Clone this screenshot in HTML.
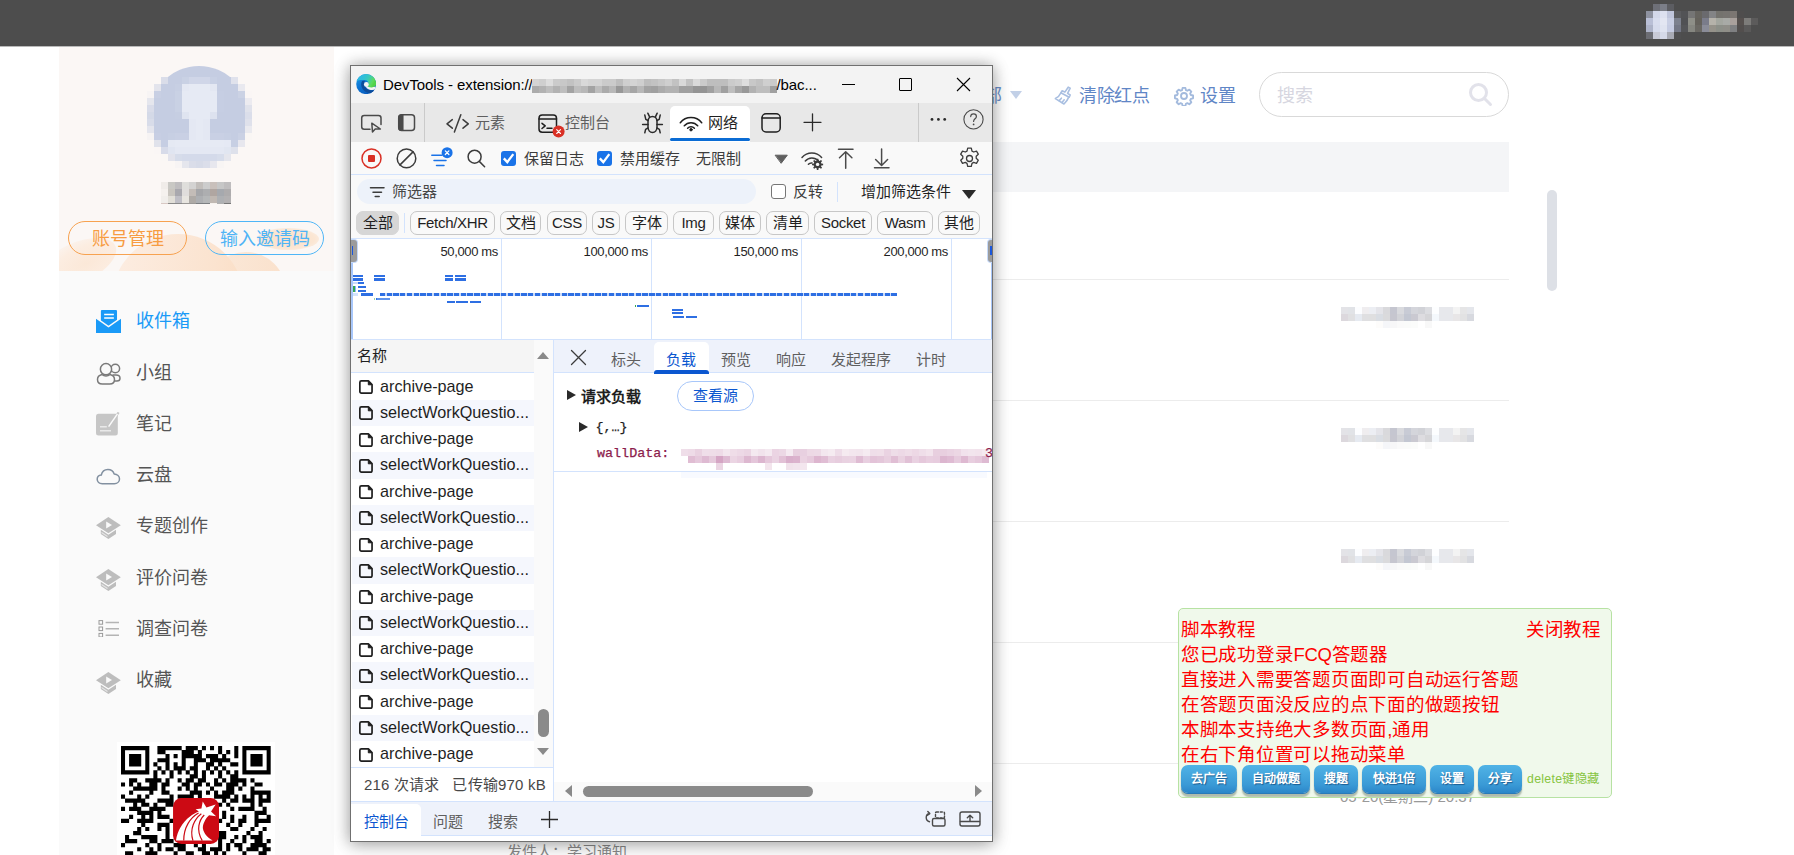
<!DOCTYPE html>
<html lang="zh-CN">
<head>
<meta charset="utf-8">
<title>收件箱</title>
<style>
*{box-sizing:border-box;margin:0;padding:0}
html,body{width:1794px;height:855px;overflow:hidden;background:#fff}
body{position:relative;font-family:"Liberation Sans",sans-serif;color:#333}
.abs{position:absolute}
.nw{white-space:nowrap}
/* ---------- page ---------- */
#topbar{position:absolute;left:0;top:0;width:1794px;height:46px;background:#4d4d4d}
#sidebar{position:absolute;left:59px;top:47px;width:275px;height:808px;background:#fafafa;overflow:hidden}
#sidehead{position:absolute;left:0;top:0;width:275px;height:224px;background:#fbf7f5;overflow:hidden}
.pillbtn{position:absolute;top:174px;width:119px;height:34px;border-radius:17px;border:1px solid;font-size:18px;line-height:34px;text-align:center;white-space:nowrap;overflow:hidden}
.menu{position:absolute;left:77px;font-size:18px;line-height:24px;height:24px;color:#555;white-space:nowrap}
.micon{position:absolute;left:37px}
.blurdate{width:133px;height:20px;background:linear-gradient(90deg,#e4e4e4 0 6%,#f4f4f4 6% 10%,#dcdcdc 10% 28%,#c6c6ca 28% 50%,#d4d4d8 50% 68%,#fff 68% 72%,#e6e6e6 72% 100%);opacity:.9}
/* ---------- devtools ---------- */
#dt{position:absolute;left:350px;top:65px;width:643px;height:777px;background:#fff;border:1px solid #707070;box-shadow:0 0 14px rgba(0,0,0,.28),0 4px 18px rgba(0,0,0,.18);overflow:hidden;font-size:15px;color:#1f1f1f}
#dt .in{position:absolute;left:0;top:0;width:641px;height:775px}

#dt .title{position:absolute;left:0;top:0;width:641px;height:37px;background:#f3f3f3}
#dt .tabs{position:absolute;left:0;top:37px;width:641px;height:39px;background:#e8e8e8}
#dt .ntb{position:absolute;left:0;top:76px;width:641px;height:33px;background:#f9f9f9;border-bottom:1px solid #d3e3fd}
#dt .frow{position:absolute;left:0;top:109px;width:641px;height:64px;background:#f9f9f9}
.t15{position:absolute;font-size:15px;line-height:20px;white-space:nowrap}
.chip{position:absolute;top:145px;height:24px;border:1px solid #c7c7c7;border-radius:7px;font-size:15px;line-height:22px;text-align:center;white-space:nowrap;color:#1f1f1f;overflow:hidden}
.cb svg{display:block}
.cb{position:absolute;width:15px;height:15px;border-radius:3px;background:#1a73e8}

#dt .tl{position:absolute;left:0;top:172px;width:641px;height:102px;background:#fff;border-top:1px solid #d3e3fd;border-bottom:1px solid #d3e3fd}
.tlab{position:absolute;top:5px;letter-spacing:-0.350px;font-size:13px;line-height:16px;color:#1f1f1f;text-align:right;width:80px;white-space:nowrap}
.gl{position:absolute;top:0;width:1px;height:100px;background:#d3e3fd}
.row{position:absolute;left:1px;width:182px;height:26.250px;font-size:16.200px;line-height:25.600px;color:#1f1f1f;white-space:nowrap;overflow:hidden;padding-left:28px;letter-spacing:0}
.row.alt{background:#f5f7fd}
.row svg{position:absolute;left:7px;top:6.600px}
.dtab{position:absolute;top:284px;font-size:15px;line-height:20px;color:#5f5f5f;white-space:nowrap}
.tb i{position:absolute;display:block}
.mono{font-family:"Liberation Mono",monospace;-webkit-text-stroke:.25px currentColor}

#tut{position:absolute;left:1178px;top:608px;width:434px;height:190px;background:#f0f9eb;border:1px solid #b7e2a3;border-radius:5px;overflow:hidden}
#tut .ln{position:absolute;left:2px;font-size:18.500px;letter-spacing:-0.260px;line-height:25px;color:#ff0000;white-space:nowrap}
.tbtn{position:absolute;top:156px;height:28px;border-radius:7px;background:linear-gradient(180deg,#50b3e6 0%,#3a9ad6 70%,#2b86c9 100%);box-shadow:0 1px 0 #2a7ab8,0 3.500px 1.500px rgba(110,125,110,.5);color:#fff;font-weight:bold;font-size:12px;line-height:29px;text-align:center;white-space:nowrap;text-shadow:1px 1px 1px rgba(0,40,90,.55)}
</style>
</head>
<body>
<div id="topbar"></div><div class="abs" style="left:0;top:46px;width:1794px;height:1px;background:#b9b9b9"></div>
<div id="sidebar">
  <div id="sidehead">
    <div class="abs" style="left:-24px;top:196px;width:84px;height:40px;border-radius:50%;transform:rotate(-24deg);background:radial-gradient(ellipse at 60% 60%,#fbe8d8 0%,#fcede1 50%,rgba(251,247,245,0) 95%)"></div>
    <div class="abs" style="left:147px;top:205px;width:80px;height:80px;border-radius:50%;background:linear-gradient(100deg,#fbe9da,#fae0ca)"></div>
    <div class="abs" style="left:53px;top:187px;width:132px;height:132px;border-radius:50%;background:linear-gradient(100deg,#fcece0 10%,#fbe3cf 70%,#fadcc2 100%)"></div>
    <div class="abs" style="left:198px;top:181px;width:62px;height:22px;border-radius:50%;background:radial-gradient(ellipse at 50% 50%,#fbe1c9 0%,#fbe6d3 60%,rgba(251,240,232,0) 100%)"></div>
    <div class="abs" style="left:90.0px;top:19.0px;width:100.0px;height:12.3px;overflow:hidden"><div class="abs" style="left:0;top:0;width:100.0px;height:100.0px;border-radius:50%;background:#c5cde2"></div></div><svg class="abs" style="left:87.9px;top:30.3px" width="105.0" height="91.0" viewBox="0 0 15 13" preserveAspectRatio="none" shape-rendering="crispEdges"><rect x="0" y="0" width="2" height="1" fill="#fbf7f5"/><rect x="2" y="0" width="1" height="1" fill="#dadde9"/><rect x="3" y="0" width="2" height="1" fill="#c5cde2"/><rect x="5" y="0" width="1" height="1" fill="#c9d1e4"/><rect x="6" y="0" width="3" height="1" fill="#d0d6e8"/><rect x="9" y="0" width="1" height="1" fill="#c8d0e4"/><rect x="10" y="0" width="2" height="1" fill="#c5cde2"/><rect x="12" y="0" width="1" height="1" fill="#e0e2ec"/><rect x="13" y="0" width="2" height="1" fill="#fbf7f5"/><rect x="0" y="1" width="1" height="1" fill="#fbf7f5"/><rect x="1" y="1" width="1" height="1" fill="#e3e4ec"/><rect x="2" y="1" width="2" height="1" fill="#c5cde2"/><rect x="4" y="1" width="1" height="1" fill="#c7cfe3"/><rect x="5" y="1" width="1" height="1" fill="#e4e8f3"/><rect x="6" y="1" width="3" height="1" fill="#e6eaf4"/><rect x="9" y="1" width="1" height="1" fill="#e3e7f2"/><rect x="10" y="1" width="3" height="1" fill="#c5cde2"/><rect x="13" y="1" width="1" height="1" fill="#e9e9ef"/><rect x="14" y="1" width="1" height="1" fill="#fbf7f5"/><rect x="0" y="2" width="1" height="1" fill="#f7f4f4"/><rect x="1" y="2" width="1" height="1" fill="#c8cfe3"/><rect x="2" y="2" width="2" height="1" fill="#c5cde2"/><rect x="4" y="2" width="1" height="1" fill="#c9d1e4"/><rect x="5" y="2" width="5" height="1" fill="#e6eaf4"/><rect x="10" y="2" width="1" height="1" fill="#c6cee3"/><rect x="11" y="2" width="2" height="1" fill="#c5cde2"/><rect x="13" y="2" width="1" height="1" fill="#cbd2e4"/><rect x="14" y="2" width="1" height="1" fill="#faf6f5"/><rect x="0" y="3" width="1" height="1" fill="#e5e6ed"/><rect x="1" y="3" width="3" height="1" fill="#c5cde2"/><rect x="4" y="3" width="1" height="1" fill="#c9d1e4"/><rect x="5" y="3" width="5" height="1" fill="#e6eaf4"/><rect x="10" y="3" width="1" height="1" fill="#c6cee3"/><rect x="11" y="3" width="3" height="1" fill="#c5cde2"/><rect x="14" y="3" width="1" height="1" fill="#ecebf0"/><rect x="0" y="4" width="1" height="1" fill="#d9dce9"/><rect x="1" y="4" width="3" height="1" fill="#c5cde2"/><rect x="4" y="4" width="1" height="1" fill="#c9d1e4"/><rect x="5" y="4" width="5" height="1" fill="#e6eaf4"/><rect x="10" y="4" width="1" height="1" fill="#c6cee3"/><rect x="11" y="4" width="3" height="1" fill="#c5cde2"/><rect x="14" y="4" width="1" height="1" fill="#e0e2eb"/><rect x="0" y="5" width="1" height="1" fill="#d4d9e7"/><rect x="1" y="5" width="3" height="1" fill="#c5cde2"/><rect x="4" y="5" width="1" height="1" fill="#c6cee2"/><rect x="5" y="5" width="1" height="1" fill="#dfe4f0"/><rect x="6" y="5" width="3" height="1" fill="#e6eaf4"/><rect x="9" y="5" width="1" height="1" fill="#dde2ef"/><rect x="10" y="5" width="4" height="1" fill="#c5cde2"/><rect x="14" y="5" width="1" height="1" fill="#dbdeea"/><rect x="0" y="6" width="1" height="1" fill="#d8dce9"/><rect x="1" y="6" width="5" height="1" fill="#c5cde2"/><rect x="6" y="6" width="1" height="1" fill="#e4e8f3"/><rect x="7" y="6" width="1" height="1" fill="#e6eaf4"/><rect x="8" y="6" width="1" height="1" fill="#e4e8f3"/><rect x="9" y="6" width="5" height="1" fill="#c5cde2"/><rect x="14" y="6" width="1" height="1" fill="#dfe1eb"/><rect x="0" y="7" width="1" height="1" fill="#e4e5ed"/><rect x="1" y="7" width="5" height="1" fill="#c5cde2"/><rect x="6" y="7" width="1" height="1" fill="#e4e8f3"/><rect x="7" y="7" width="1" height="1" fill="#e6eaf4"/><rect x="8" y="7" width="1" height="1" fill="#e4e8f3"/><rect x="9" y="7" width="5" height="1" fill="#c5cde2"/><rect x="14" y="7" width="1" height="1" fill="#eaeaef"/><rect x="0" y="8" width="1" height="1" fill="#f6f3f3"/><rect x="1" y="8" width="1" height="1" fill="#c7cee3"/><rect x="2" y="8" width="1" height="1" fill="#c5cde2"/><rect x="3" y="8" width="1" height="1" fill="#c7cfe3"/><rect x="4" y="8" width="2" height="1" fill="#c9d0e4"/><rect x="6" y="8" width="1" height="1" fill="#e4e8f3"/><rect x="7" y="8" width="1" height="1" fill="#e6eaf4"/><rect x="8" y="8" width="1" height="1" fill="#e4e8f3"/><rect x="9" y="8" width="2" height="1" fill="#c9d0e4"/><rect x="11" y="8" width="1" height="1" fill="#c7cfe3"/><rect x="12" y="8" width="1" height="1" fill="#c5cde2"/><rect x="13" y="8" width="1" height="1" fill="#cad1e4"/><rect x="14" y="8" width="1" height="1" fill="#f9f6f4"/><rect x="0" y="9" width="1" height="1" fill="#fbf7f5"/><rect x="1" y="9" width="1" height="1" fill="#e0e2eb"/><rect x="2" y="9" width="1" height="1" fill="#c6cee3"/><rect x="3" y="9" width="1" height="1" fill="#e5e9f3"/><rect x="4" y="9" width="7" height="1" fill="#e6eaf4"/><rect x="11" y="9" width="1" height="1" fill="#e5e9f4"/><rect x="12" y="9" width="1" height="1" fill="#c7cfe3"/><rect x="13" y="9" width="1" height="1" fill="#e7e7ee"/><rect x="14" y="9" width="1" height="1" fill="#fbf7f5"/><rect x="0" y="10" width="1" height="1" fill="#fbf7f5"/><rect x="1" y="10" width="1" height="1" fill="#faf6f5"/><rect x="2" y="10" width="1" height="1" fill="#d7dbe9"/><rect x="3" y="10" width="1" height="1" fill="#e0e5f1"/><rect x="4" y="10" width="7" height="1" fill="#e4e8f3"/><rect x="11" y="10" width="1" height="1" fill="#e1e6f1"/><rect x="12" y="10" width="1" height="1" fill="#dee1eb"/><rect x="13" y="10" width="2" height="1" fill="#fbf7f5"/><rect x="0" y="11" width="2" height="1" fill="#fbf7f5"/><rect x="2" y="11" width="1" height="1" fill="#faf7f5"/><rect x="3" y="11" width="1" height="1" fill="#e2e3ec"/><rect x="4" y="11" width="1" height="1" fill="#d6dcea"/><rect x="5" y="11" width="5" height="1" fill="#d4daea"/><rect x="10" y="11" width="1" height="1" fill="#d7ddeb"/><rect x="11" y="11" width="1" height="1" fill="#e5e6ed"/><rect x="12" y="11" width="3" height="1" fill="#fbf7f5"/><rect x="0" y="12" width="4" height="1" fill="#fbf7f5"/><rect x="4" y="12" width="1" height="1" fill="#f7f4f4"/><rect x="5" y="12" width="1" height="1" fill="#e5e6ed"/><rect x="6" y="12" width="1" height="1" fill="#dadde9"/><rect x="7" y="12" width="1" height="1" fill="#d7dbe8"/><rect x="8" y="12" width="1" height="1" fill="#dbdeea"/><rect x="9" y="12" width="1" height="1" fill="#e7e7ee"/><rect x="10" y="12" width="1" height="1" fill="#f8f5f4"/><rect x="11" y="12" width="4" height="1" fill="#fbf7f5"/></svg>
    <svg class="abs" style="left:102.0px;top:135.0px" width="70.0" height="21.0" viewBox="0 0 10 3" preserveAspectRatio="none" shape-rendering="crispEdges"><rect x="0" y="0" width="1" height="1" fill="#f0ece9"/><rect x="1" y="0" width="1" height="1" fill="#c9c8c4"/><rect x="2" y="0" width="1" height="1" fill="#bfbdbf"/><rect x="3" y="0" width="1" height="1" fill="#dfdedb"/><rect x="4" y="0" width="1" height="1" fill="#d4d3d2"/><rect x="5" y="0" width="1" height="1" fill="#c2bebb"/><rect x="6" y="0" width="1" height="1" fill="#cccccc"/><rect x="7" y="0" width="1" height="1" fill="#c9c0bb"/><rect x="8" y="0" width="1" height="1" fill="#c6c6c6"/><rect x="9" y="0" width="1" height="1" fill="#bfbdbe"/><rect x="0" y="1" width="1" height="1" fill="#f5f1ee"/><rect x="1" y="1" width="1" height="1" fill="#c9c5bf"/><rect x="2" y="1" width="1" height="1" fill="#a9a8ae"/><rect x="3" y="1" width="1" height="1" fill="#e0dddc"/><rect x="4" y="1" width="1" height="1" fill="#c3bcb7"/><rect x="5" y="1" width="1" height="1" fill="#a5a6a9"/><rect x="6" y="1" width="1" height="1" fill="#adaeb0"/><rect x="7" y="1" width="1" height="1" fill="#b0a6a1"/><rect x="8" y="1" width="1" height="1" fill="#a6a9ae"/><rect x="9" y="1" width="1" height="1" fill="#aeacad"/><rect x="0" y="2" width="1" height="1" fill="#f1eeeb"/><rect x="1" y="2" width="1" height="1" fill="#e2dfd8"/><rect x="2" y="2" width="1" height="1" fill="#bfbec5"/><rect x="3" y="2" width="1" height="1" fill="#e8e5e0"/><rect x="4" y="2" width="1" height="1" fill="#aeaaa6"/><rect x="5" y="2" width="1" height="1" fill="#adafb2"/><rect x="6" y="2" width="1" height="1" fill="#b5b7b8"/><rect x="7" y="2" width="1" height="1" fill="#c0b8b2"/><rect x="8" y="2" width="1" height="1" fill="#aeb0b3"/><rect x="9" y="2" width="1" height="1" fill="#b3b1b2"/></svg><div class="abs" style="left:102px;top:156.2px;width:70px;height:1px;background:linear-gradient(90deg,#d9c9c4 0 10%,#8a8a8a 10% 30%,#9a9896 30% 50%,#7c7f82 50% 70%,#f6f2ee 70% 80%,#b0b0b0 80% 90%,#777 90%)"></div>
    <div class="pillbtn" style="left:9px;border-color:#f7a250;color:#f79c42">账号管理</div>
    <div class="pillbtn" style="left:146px;border-color:#4fb6f7;color:#4fb4f6">输入邀请码</div>
  </div>

  <svg class="micon" style="top:262.500px" width="25" height="23" viewBox="0 0 24.500 22.500"><rect x="4.800" y="0" width="15.800" height="16" rx="1" fill="#1a9af7"/><path d="M8 4.300h9.500M8 7.800h9.500" stroke="#fff" stroke-width="1.500"/><path d="M0 7.700L12.250 16.300 24.500 7.700V22.500H0z" fill="#1a9af7"/><path d="M0 7.700L12.250 16.300 24.500 7.700" fill="none" stroke="#fafafa" stroke-width="1.400"/></svg>
  <svg class="micon" style="top:315px" width="25" height="23" viewBox="0 0 25 23" fill="#fafafa" stroke="#7a7a7a" stroke-width="1.500"><circle cx="19.300" cy="6.500" r="4.300"/><path d="M16.500 13h3.500c2.500 0 4 1.500 4 3.200 0 1.800-1.200 2.800-3 2.800h-4"/><circle cx="10" cy="7.200" r="5.600"/><path d="M5.800 12.500C3 13.300 1.500 15.200 1.500 17.500c0 2.800 2 4.500 4.800 4.500h7.400c2.800 0 4.800-1.700 4.800-4.500 0-2.300-1.500-4.200-4.300-5-1.300 1-2.700 1.500-4.200 1.500s-2.900-.5-4.200-1.500z"/></svg>
  <svg class="micon" style="top:365px" width="25" height="25" viewBox="0 0 25 25"><rect x="0" y="1.700" width="21.800" height="21.800" rx="2.500" fill="#c6c6c6"/><path d="M22.600 .4L12.800 14.300" stroke="#c6c6c6" stroke-width="2.200"/><path d="M21.500 1.900L12.600 14.600" stroke="#fafafa" stroke-width="1.500"/><path d="M4 14.800h6.800M4 18.800h11" stroke="#e9e9e9" stroke-width="1.500"/></svg>
  <svg class="micon" style="top:421px" width="25" height="17" viewBox="0 0 25 17" fill="none" stroke="#8290a0" stroke-width="1.500"><path d="M6.200 15.700c-3 0-5-1.900-5-4.400 0-2.300 1.700-4.100 4.100-4.300C6 3.700 8.600 1.400 11.900 1.400c3 0 5.400 1.800 6.300 4.500 3 .2 5.300 2.300 5.300 5 0 2.700-2.200 4.800-5.200 4.800z"/></svg>
  <svg class="micon" style="top:470px" width="25" height="22" viewBox="0 0 25 22"><path d="M12.400 0L24.800 8.300 12.400 16.300 0 8.300z" fill="#bdbdbd"/><path d="M4.800 12.800v4.300l7.600 4.900 7.600-4.900v-4.300l-7.600 4.900z" fill="#bdbdbd"/><path d="M10.200 4.600v6.800l5.800-3.400z" fill="#fafafa"/><path d="M5.500 15.500l6 3.900" stroke="#e4e4e4" stroke-width="1.200"/></svg>
  <svg class="micon" style="top:522px" width="25" height="22" viewBox="0 0 25 22"><path d="M12.400 0L24.800 8.300 12.400 16.300 0 8.300z" fill="#bdbdbd"/><path d="M4.800 12.800v4.300l7.600 4.900 7.600-4.900v-4.300l-7.600 4.900z" fill="#bdbdbd"/><path d="M10.200 4.600v6.800l5.800-3.400z" fill="#fafafa"/><path d="M5.500 15.500l6 3.900" stroke="#e4e4e4" stroke-width="1.200"/></svg>
  <svg class="micon" style="top:573px" width="25" height="17" viewBox="0 0 25 17" fill="none"><g stroke="#9a9a9a" stroke-width="1"><rect x="3" y="0.600" width="3.600" height="3.600"/><rect x="3" y="7" width="3.600" height="3.600"/><rect x="3" y="13.400" width="3.600" height="3.600"/></g><path d="M9.600 2.400H23M9.600 8.800H23M9.600 15.200H23" stroke="#b4b4b4" stroke-width="1.500"/></svg>
  <svg class="micon" style="top:625px" width="25" height="22" viewBox="0 0 25 22"><path d="M12.400 0L24.800 8.300 12.400 16.300 0 8.300z" fill="#bdbdbd"/><path d="M4.800 12.800v4.300l7.600 4.900 7.600-4.900v-4.300l-7.600 4.900z" fill="#bdbdbd"/><path d="M10.200 4.600v6.800l5.800-3.400z" fill="#fafafa"/><path d="M5.500 15.500l6 3.900" stroke="#e4e4e4" stroke-width="1.200"/></svg>
  <div class="menu" style="top:262px;color:#1a9af7">收件箱</div>
  <div class="menu" style="top:314px">小组</div>
  <div class="menu" style="top:365px">笔记</div>
  <div class="menu" style="top:416px">云盘</div>
  <div class="menu" style="top:467px">专题创作</div>
  <div class="menu" style="top:519px">评价问卷</div>
  <div class="menu" style="top:570px">调查问卷</div>
  <div class="menu" style="top:621px">收藏</div>
  <div id="qr" class="abs" style="left:58px;top:695px;width:158px;height:160px;background:#fff">
<svg class="abs" style="left:4px;top:4px" width="149.700" height="149.700" viewBox="0 0 37 37"><path d="M0 0h7v1.04h-7zM9 0h6v1.04h-6zM16 0h3v1.04h-3zM20 0h1v1.04h-1zM22 0h1v1.04h-1zM24 0h1v1.04h-1zM28 0h1v1.04h-1zM30 0h7v1.04h-7zM0 1h1v1.04h-1zM6 1h1v1.04h-1zM9 1h2v1.04h-2zM15 1h3v1.04h-3zM19 1h1v1.04h-1zM24 1h1v1.04h-1zM26 1h1v1.04h-1zM28 1h1v1.04h-1zM30 1h1v1.04h-1zM36 1h1v1.04h-1zM0 2h1v1.04h-1zM2 2h3v1.04h-3zM6 2h1v1.04h-1zM11 2h1v1.04h-1zM13 2h1v1.04h-1zM15 2h5v1.04h-5zM21 2h3v1.04h-3zM25 2h1v1.04h-1zM28 2h1v1.04h-1zM30 2h1v1.04h-1zM32 2h3v1.04h-3zM36 2h1v1.04h-1zM0 3h1v1.04h-1zM2 3h3v1.04h-3zM6 3h1v1.04h-1zM9 3h3v1.04h-3zM15 3h1v1.04h-1zM18 3h3v1.04h-3zM22 3h5v1.04h-5zM30 3h1v1.04h-1zM32 3h3v1.04h-3zM36 3h1v1.04h-1zM0 4h1v1.04h-1zM2 4h3v1.04h-3zM6 4h1v1.04h-1zM8 4h1v1.04h-1zM11 4h1v1.04h-1zM13 4h1v1.04h-1zM15 4h1v1.04h-1zM18 4h1v1.04h-1zM21 4h2v1.04h-2zM24 4h1v1.04h-1zM27 4h2v1.04h-2zM30 4h1v1.04h-1zM32 4h3v1.04h-3zM36 4h1v1.04h-1zM0 5h1v1.04h-1zM6 5h1v1.04h-1zM9 5h1v1.04h-1zM11 5h1v1.04h-1zM13 5h3v1.04h-3zM17 5h2v1.04h-2zM21 5h1v1.04h-1zM23 5h1v1.04h-1zM25 5h1v1.04h-1zM30 5h1v1.04h-1zM36 5h1v1.04h-1zM0 6h7v1.04h-7zM8 6h1v1.04h-1zM10 6h1v1.04h-1zM12 6h1v1.04h-1zM14 6h1v1.04h-1zM16 6h1v1.04h-1zM18 6h1v1.04h-1zM20 6h1v1.04h-1zM22 6h1v1.04h-1zM24 6h1v1.04h-1zM26 6h1v1.04h-1zM28 6h1v1.04h-1zM30 6h7v1.04h-7zM8 7h1v1.04h-1zM12 7h1v1.04h-1zM17 7h2v1.04h-2zM20 7h1v1.04h-1zM24 7h1v1.04h-1zM27 7h2v1.04h-2zM2 8h2v1.04h-2zM6 8h4v1.04h-4zM11 8h1v1.04h-1zM14 8h1v1.04h-1zM16 8h2v1.04h-2zM19 8h2v1.04h-2zM23 8h1v1.04h-1zM25 8h1v1.04h-1zM27 8h4v1.04h-4zM32 8h1v1.04h-1zM0 9h1v1.04h-1zM2 9h1v1.04h-1zM4 9h1v1.04h-1zM7 9h2v1.04h-2zM10 9h2v1.04h-2zM15 9h2v1.04h-2zM18 9h2v1.04h-2zM21 9h1v1.04h-1zM23 9h2v1.04h-2zM26 9h3v1.04h-3zM30 9h1v1.04h-1zM33 9h2v1.04h-2zM3 10h6v1.04h-6zM10 10h1v1.04h-1zM14 10h1v1.04h-1zM16 10h1v1.04h-1zM18 10h1v1.04h-1zM22 10h1v1.04h-1zM26 10h2v1.04h-2zM29 10h1v1.04h-1zM32 10h1v1.04h-1zM2 11h1v1.04h-1zM7 11h1v1.04h-1zM10 11h2v1.04h-2zM17 11h3v1.04h-3zM21 11h1v1.04h-1zM23 11h1v1.04h-1zM25 11h3v1.04h-3zM32 11h5v1.04h-5zM0 12h1v1.04h-1zM4 12h1v1.04h-1zM6 12h1v1.04h-1zM12 12h1v1.04h-1zM14 12h4v1.04h-4zM19 12h1v1.04h-1zM23 12h4v1.04h-4zM28 12h1v1.04h-1zM30 12h1v1.04h-1zM32 12h1v1.04h-1zM34 12h1v1.04h-1zM36 12h1v1.04h-1zM1 13h5v1.04h-5zM9 13h4v1.04h-4zM25 13h1v1.04h-1zM27 13h2v1.04h-2zM30 13h3v1.04h-3zM34 13h3v1.04h-3zM3 14h1v1.04h-1zM5 14h2v1.04h-2zM8 14h1v1.04h-1zM11 14h2v1.04h-2zM24 14h1v1.04h-1zM26 14h1v1.04h-1zM32 14h1v1.04h-1zM34 14h1v1.04h-1zM0 15h1v1.04h-1zM2 15h3v1.04h-3zM7 15h4v1.04h-4zM27 15h1v1.04h-1zM29 15h4v1.04h-4zM35 15h1v1.04h-1zM4 16h4v1.04h-4zM9 16h1v1.04h-1zM25 16h1v1.04h-1zM33 16h3v1.04h-3zM2 17h1v1.04h-1zM5 17h1v1.04h-1zM7 17h1v1.04h-1zM9 17h3v1.04h-3zM25 17h1v1.04h-1zM27 17h1v1.04h-1zM30 17h1v1.04h-1zM33 17h1v1.04h-1zM36 17h1v1.04h-1zM0 18h2v1.04h-2zM4 18h4v1.04h-4zM12 18h1v1.04h-1zM24 18h1v1.04h-1zM27 18h1v1.04h-1zM29 18h2v1.04h-2zM33 18h4v1.04h-4zM5 19h1v1.04h-1zM9 19h3v1.04h-3zM26 19h1v1.04h-1zM29 19h1v1.04h-1zM33 19h1v1.04h-1zM4 20h1v1.04h-1zM6 20h1v1.04h-1zM9 20h1v1.04h-1zM11 20h1v1.04h-1zM27 20h2v1.04h-2zM32 20h1v1.04h-1zM35 20h1v1.04h-1zM3 21h2v1.04h-2zM11 21h1v1.04h-1zM24 21h2v1.04h-2zM31 21h1v1.04h-1zM34 21h1v1.04h-1zM1 22h1v1.04h-1zM5 22h4v1.04h-4zM11 22h1v1.04h-1zM24 22h2v1.04h-2zM28 22h1v1.04h-1zM30 22h1v1.04h-1zM32 22h3v1.04h-3zM1 23h3v1.04h-3zM7 23h2v1.04h-2zM10 23h3v1.04h-3zM24 23h1v1.04h-1zM27 23h1v1.04h-1zM30 23h1v1.04h-1zM33 23h2v1.04h-2zM36 23h1v1.04h-1zM0 24h1v1.04h-1zM6 24h1v1.04h-1zM9 24h1v1.04h-1zM13 24h3v1.04h-3zM18 24h1v1.04h-1zM20 24h1v1.04h-1zM24 24h1v1.04h-1zM26 24h1v1.04h-1zM28 24h2v1.04h-2zM32 24h4v1.04h-4zM4 25h1v1.04h-1zM7 25h1v1.04h-1zM9 25h1v1.04h-1zM11 25h2v1.04h-2zM14 25h2v1.04h-2zM19 25h2v1.04h-2zM22 25h3v1.04h-3zM26 25h1v1.04h-1zM29 25h1v1.04h-1zM31 25h3v1.04h-3zM35 25h2v1.04h-2zM1 26h2v1.04h-2zM6 26h3v1.04h-3zM13 26h1v1.04h-1zM16 26h2v1.04h-2zM20 26h2v1.04h-2zM23 26h1v1.04h-1zM25 26h1v1.04h-1zM30 26h1v1.04h-1zM34 26h2v1.04h-2zM1 27h1v1.04h-1zM3 27h1v1.04h-1zM5 27h2v1.04h-2zM8 27h1v1.04h-1zM11 27h1v1.04h-1zM14 27h2v1.04h-2zM17 27h1v1.04h-1zM20 27h1v1.04h-1zM22 27h2v1.04h-2zM25 27h2v1.04h-2zM28 27h1v1.04h-1zM31 27h1v1.04h-1zM33 27h2v1.04h-2zM36 27h1v1.04h-1z" fill="#000"/></svg>
<svg class="abs" style="left:55.700px;top:55.600px" width="46.100" height="46" viewBox="0 0 46 46"><rect width="46" height="46" rx="8.500" fill="#cc0a14"/><path d="M29.700 3.600L33.400 9.600 42.600 6.400 38 13.400 43 18.200 36 17.300C33.500 19.500 30.500 24 29.800 29 29.500 33 33 39 39.600 42.400H2.900C4.500 33 9 24.500 17 18.500 19.500 16.600 22.500 15 25.800 13.600L22.600 11.200 28.400 10.400z" fill="#fff"/><path d="M25.500 15C17.500 19.500 10.600 29 10.700 42.600M28.300 15.800C21.500 21 16.200 31 19.900 42.600M31.200 17C26.200 22 22.600 32 29.200 42.600" stroke="#cc0a14" stroke-width="1.200" fill="none"/></svg>
</div>
</div>
<div id="main">
  <div class="abs nw" style="left:966px;top:84px;font-size:18px;line-height:24px;color:#6b8fc9">全部</div>
  <div class="abs" style="left:1010px;top:91px;width:0;height:0;border-left:6.5px solid transparent;border-right:6.5px solid transparent;border-top:8px solid #c2d0e7"></div>
  <svg class="abs" style="left:1054px;top:85px" width="20" height="21" viewBox="0 0 20 21" fill="none" stroke="#a9bfe1" stroke-width="1.6" stroke-linecap="round" stroke-linejoin="round"><path d="M14.2 2.2l2 1-2.6 5.2 2.6 1.6-1 2.2-8.4-4.4 1.2-2 2.9 1.3z"/><path d="M6.6 8.2C5.4 11 3.6 12.6 1.4 13.6l8.6 5.4c2-1.8 3.6-4 4.6-6.6"/><path d="M5.2 15.6l2.2-2.4M8 17.4l2.2-2.6"/></svg>
  <div class="abs nw" style="left:1079px;top:84px;font-size:18px;line-height:24px;color:#5f86c6;letter-spacing:-0.4px">清除红点</div>
  <svg class="abs" style="left:1174px;top:86px" width="20" height="20" viewBox="0 0 24 24" fill="none" stroke="#a3badd" stroke-width="2.2" stroke-linejoin="round"><circle cx="12" cy="12" r="3.6"/><path d="M10.3 2.2h3.4l.6 2.7 1.7.8 2.4-1.4 2.4 2.4-1.4 2.4.8 1.7 2.7.6v3.4l-2.7.6-.8 1.7 1.4 2.4-2.4 2.4-2.4-1.4-1.7.8-.6 2.7h-3.4l-.6-2.7-1.7-.8-2.4 1.4-2.4-2.4 1.4-2.4-.8-1.7-2.7-.6v-3.4l2.7-.6.8-1.7-1.4-2.4 2.4-2.4 2.4 1.4 1.7-.8z"/></svg>
  <div class="abs nw" style="left:1200px;top:84px;font-size:18px;line-height:24px;color:#5f86c6;letter-spacing:-0.4px">设置</div>
  <div class="abs" style="left:1259px;top:72px;width:250px;height:45px;border:1px solid #d9d9d9;border-radius:23px;background:#fff"></div>
  <div class="abs nw" style="left:1277px;top:84px;font-size:18px;line-height:24px;color:#d6d6e0">搜索</div>
  <svg class="abs" style="left:1468px;top:82px" width="25" height="25" viewBox="0 0 25 25" fill="none" stroke="#e2e2ea" stroke-width="3" stroke-linecap="round"><circle cx="10.5" cy="10.5" r="8"/><path d="M17 17l5.5 5.5"/></svg>
  <div class="abs" style="left:360px;top:142px;width:1149px;height:50px;background:#f4f5f7"></div>
  <div class="abs" style="left:360px;top:279px;width:1149px;height:1px;background:#ececec"></div>
  <div class="abs" style="left:360px;top:400px;width:1149px;height:1px;background:#ececec"></div>
  <div class="abs" style="left:360px;top:521px;width:1149px;height:1px;background:#ececec"></div>
  <div class="abs" style="left:360px;top:642px;width:1149px;height:1px;background:#ececec"></div>
  <div class="abs" style="left:360px;top:763px;width:1149px;height:1px;background:#ececec"></div>
  <div class="abs" style="left:1547px;top:190px;width:10px;height:101px;border-radius:5px;background:#dde0e6"></div>
  <svg class="abs" style="left:1341.0px;top:307.0px" width="133.0" height="21.0" viewBox="0 0 19 3" preserveAspectRatio="none" shape-rendering="crispEdges"><rect x="0" y="0" width="1" height="1" fill="#e3e3e7"/><rect x="1" y="0" width="1" height="1" fill="#e1e3e7"/><rect x="2" y="0" width="1" height="1" fill="#fcfdff"/><rect x="3" y="0" width="1" height="1" fill="#efedef"/><rect x="4" y="0" width="1" height="1" fill="#eceef3"/><rect x="5" y="0" width="1" height="1" fill="#e4e4e9"/><rect x="6" y="0" width="1" height="1" fill="#d9d9dc"/><rect x="7" y="0" width="1" height="1" fill="#c5c6d0"/><rect x="8" y="0" width="1" height="1" fill="#d9dade"/><rect x="9" y="0" width="1" height="1" fill="#c8cbd5"/><rect x="10" y="0" width="1" height="1" fill="#d4d5db"/><rect x="11" y="0" width="1" height="1" fill="#d1d2d7"/><rect x="12" y="0" width="1" height="1" fill="#dcdde1"/><rect x="13" y="0" width="1" height="1" fill="#fdfeff"/><rect x="14" y="0" width="2" height="1" fill="#e7e8ec"/><rect x="16" y="0" width="1" height="1" fill="#f3f3f3"/><rect x="17" y="0" width="1" height="1" fill="#e5e5e6"/><rect x="18" y="0" width="1" height="1" fill="#e4e6eb"/><rect x="0" y="1" width="1" height="1" fill="#dcd8dd"/><rect x="1" y="1" width="1" height="1" fill="#e0e0e2"/><rect x="2" y="1" width="1" height="1" fill="#e6eaf1"/><rect x="3" y="1" width="1" height="1" fill="#dfdfe1"/><rect x="4" y="1" width="1" height="1" fill="#dfdfe0"/><rect x="5" y="1" width="1" height="1" fill="#d9dde3"/><rect x="6" y="1" width="1" height="1" fill="#dadadc"/><rect x="7" y="1" width="1" height="1" fill="#c6c6cf"/><rect x="8" y="1" width="1" height="1" fill="#d2d3d8"/><rect x="9" y="1" width="1" height="1" fill="#c3c7d2"/><rect x="10" y="1" width="1" height="1" fill="#cac9d1"/><rect x="11" y="1" width="1" height="1" fill="#dddce0"/><rect x="12" y="1" width="1" height="1" fill="#d5d5d8"/><rect x="13" y="1" width="1" height="1" fill="#f4f8fc"/><rect x="14" y="1" width="2" height="1" fill="#e7e8ec"/><rect x="16" y="1" width="1" height="1" fill="#e8e6e7"/><rect x="17" y="1" width="1" height="1" fill="#e2e2e3"/><rect x="18" y="1" width="1" height="1" fill="#d7d9df"/><rect x="5" y="2" width="1" height="1" fill="#fdfcfb"/><rect x="6" y="2" width="1" height="1" fill="#f5f6f9"/><rect x="7" y="2" width="1" height="1" fill="#f7f7f8"/><rect x="8" y="2" width="1" height="1" fill="#fafafa"/><rect x="9" y="2" width="1" height="1" fill="#fafbfa"/><rect x="10" y="2" width="1" height="1" fill="#fbfcfb"/><rect x="12" y="2" width="1" height="1" fill="#f8f8f8"/></svg>
  <svg class="abs" style="left:1341.0px;top:428.0px" width="133.0" height="21.0" viewBox="0 0 19 3" preserveAspectRatio="none" shape-rendering="crispEdges"><rect x="0" y="0" width="1" height="1" fill="#e3e3e7"/><rect x="1" y="0" width="1" height="1" fill="#e1e3e7"/><rect x="2" y="0" width="1" height="1" fill="#fcfdff"/><rect x="3" y="0" width="1" height="1" fill="#efedef"/><rect x="4" y="0" width="1" height="1" fill="#eceef3"/><rect x="5" y="0" width="1" height="1" fill="#e4e4e9"/><rect x="6" y="0" width="1" height="1" fill="#d9d9dc"/><rect x="7" y="0" width="1" height="1" fill="#c5c6d0"/><rect x="8" y="0" width="1" height="1" fill="#d9dade"/><rect x="9" y="0" width="1" height="1" fill="#c8cbd5"/><rect x="10" y="0" width="1" height="1" fill="#d4d5db"/><rect x="11" y="0" width="1" height="1" fill="#d1d2d7"/><rect x="12" y="0" width="1" height="1" fill="#dcdde1"/><rect x="13" y="0" width="1" height="1" fill="#fdfeff"/><rect x="14" y="0" width="2" height="1" fill="#e7e8ec"/><rect x="16" y="0" width="1" height="1" fill="#f3f3f3"/><rect x="17" y="0" width="1" height="1" fill="#e5e5e6"/><rect x="18" y="0" width="1" height="1" fill="#e4e6eb"/><rect x="0" y="1" width="1" height="1" fill="#dcd8dd"/><rect x="1" y="1" width="1" height="1" fill="#e0e0e2"/><rect x="2" y="1" width="1" height="1" fill="#e6eaf1"/><rect x="3" y="1" width="1" height="1" fill="#dfdfe1"/><rect x="4" y="1" width="1" height="1" fill="#dfdfe0"/><rect x="5" y="1" width="1" height="1" fill="#d9dde3"/><rect x="6" y="1" width="1" height="1" fill="#dadadc"/><rect x="7" y="1" width="1" height="1" fill="#c6c6cf"/><rect x="8" y="1" width="1" height="1" fill="#d2d3d8"/><rect x="9" y="1" width="1" height="1" fill="#c3c7d2"/><rect x="10" y="1" width="1" height="1" fill="#cac9d1"/><rect x="11" y="1" width="1" height="1" fill="#dddce0"/><rect x="12" y="1" width="1" height="1" fill="#d5d5d8"/><rect x="13" y="1" width="1" height="1" fill="#f4f8fc"/><rect x="14" y="1" width="2" height="1" fill="#e7e8ec"/><rect x="16" y="1" width="1" height="1" fill="#e8e6e7"/><rect x="17" y="1" width="1" height="1" fill="#e2e2e3"/><rect x="18" y="1" width="1" height="1" fill="#d7d9df"/><rect x="5" y="2" width="1" height="1" fill="#fdfcfb"/><rect x="6" y="2" width="1" height="1" fill="#f5f6f9"/><rect x="7" y="2" width="1" height="1" fill="#f7f7f8"/><rect x="8" y="2" width="1" height="1" fill="#fafafa"/><rect x="9" y="2" width="1" height="1" fill="#fafbfa"/><rect x="10" y="2" width="1" height="1" fill="#fbfcfb"/><rect x="12" y="2" width="1" height="1" fill="#f8f8f8"/></svg>
  <svg class="abs" style="left:1341.0px;top:548.6px" width="133.0" height="21.0" viewBox="0 0 19 3" preserveAspectRatio="none" shape-rendering="crispEdges"><rect x="0" y="0" width="1" height="1" fill="#e3e3e7"/><rect x="1" y="0" width="1" height="1" fill="#e1e3e7"/><rect x="2" y="0" width="1" height="1" fill="#fcfdff"/><rect x="3" y="0" width="1" height="1" fill="#efedef"/><rect x="4" y="0" width="1" height="1" fill="#eceef3"/><rect x="5" y="0" width="1" height="1" fill="#e4e4e9"/><rect x="6" y="0" width="1" height="1" fill="#d9d9dc"/><rect x="7" y="0" width="1" height="1" fill="#c5c6d0"/><rect x="8" y="0" width="1" height="1" fill="#d9dade"/><rect x="9" y="0" width="1" height="1" fill="#c8cbd5"/><rect x="10" y="0" width="1" height="1" fill="#d4d5db"/><rect x="11" y="0" width="1" height="1" fill="#d1d2d7"/><rect x="12" y="0" width="1" height="1" fill="#dcdde1"/><rect x="13" y="0" width="1" height="1" fill="#fdfeff"/><rect x="14" y="0" width="2" height="1" fill="#e7e8ec"/><rect x="16" y="0" width="1" height="1" fill="#f3f3f3"/><rect x="17" y="0" width="1" height="1" fill="#e5e5e6"/><rect x="18" y="0" width="1" height="1" fill="#e4e6eb"/><rect x="0" y="1" width="1" height="1" fill="#dcd8dd"/><rect x="1" y="1" width="1" height="1" fill="#e0e0e2"/><rect x="2" y="1" width="1" height="1" fill="#e6eaf1"/><rect x="3" y="1" width="1" height="1" fill="#dfdfe1"/><rect x="4" y="1" width="1" height="1" fill="#dfdfe0"/><rect x="5" y="1" width="1" height="1" fill="#d9dde3"/><rect x="6" y="1" width="1" height="1" fill="#dadadc"/><rect x="7" y="1" width="1" height="1" fill="#c6c6cf"/><rect x="8" y="1" width="1" height="1" fill="#d2d3d8"/><rect x="9" y="1" width="1" height="1" fill="#c3c7d2"/><rect x="10" y="1" width="1" height="1" fill="#cac9d1"/><rect x="11" y="1" width="1" height="1" fill="#dddce0"/><rect x="12" y="1" width="1" height="1" fill="#d5d5d8"/><rect x="13" y="1" width="1" height="1" fill="#f4f8fc"/><rect x="14" y="1" width="2" height="1" fill="#e7e8ec"/><rect x="16" y="1" width="1" height="1" fill="#e8e6e7"/><rect x="17" y="1" width="1" height="1" fill="#e2e2e3"/><rect x="18" y="1" width="1" height="1" fill="#d7d9df"/><rect x="5" y="2" width="1" height="1" fill="#fdfcfb"/><rect x="6" y="2" width="1" height="1" fill="#f5f6f9"/><rect x="7" y="2" width="1" height="1" fill="#f7f7f8"/><rect x="8" y="2" width="1" height="1" fill="#fafafa"/><rect x="9" y="2" width="1" height="1" fill="#fafbfa"/><rect x="10" y="2" width="1" height="1" fill="#fbfcfb"/><rect x="12" y="2" width="1" height="1" fill="#f8f8f8"/></svg>
  <div class="abs nw" style="left:1340px;top:787px;font-size:15px;line-height:20px;color:#999">05-20(星期二) 20:37</div>
  <div class="abs nw" style="left:507px;top:842px;font-size:15px;line-height:20px;color:#8a8a8a">发件人：学习通知</div>
  <svg class="abs" style="left:1646.2px;top:3.9px" width="112.0" height="35.0" viewBox="0 0 16 5" preserveAspectRatio="none" shape-rendering="crispEdges"><rect x="1" y="0" width="1" height="1" fill="#6e7078"/><rect x="2" y="0" width="1" height="1" fill="#7b7e88"/><rect x="3" y="0" width="1" height="1" fill="#5c5d62"/><rect x="0" y="1" width="1" height="1" fill="#8e92a0"/><rect x="1" y="1" width="1" height="1" fill="#d3d8ea"/><rect x="2" y="1" width="1" height="1" fill="#dde1f0"/><rect x="3" y="1" width="1" height="1" fill="#c0c6dc"/><rect x="4" y="1" width="1" height="1" fill="#5a5b5e"/><rect x="5" y="1" width="1" height="1" fill="#525356"/><rect x="6" y="1" width="1" height="1" fill="#757575"/><rect x="7" y="1" width="1" height="1" fill="#66645f"/><rect x="8" y="1" width="1" height="1" fill="#6a6a6e"/><rect x="9" y="1" width="1" height="1" fill="#838486"/><rect x="10" y="1" width="1" height="1" fill="#74736e"/><rect x="11" y="1" width="1" height="1" fill="#767470"/><rect x="12" y="1" width="1" height="1" fill="#7c7672"/><rect x="13" y="1" width="1" height="1" fill="#4f4d4d"/><rect x="0" y="2" width="1" height="1" fill="#b9bfd6"/><rect x="1" y="2" width="1" height="1" fill="#d8ddee"/><rect x="2" y="2" width="1" height="1" fill="#e3e6f2"/><rect x="3" y="2" width="1" height="1" fill="#c9cfe4"/><rect x="4" y="2" width="1" height="1" fill="#7c818e"/><rect x="5" y="2" width="1" height="1" fill="#505154"/><rect x="6" y="2" width="1" height="1" fill="#8e8f88"/><rect x="7" y="2" width="1" height="1" fill="#65625c"/><rect x="8" y="2" width="1" height="1" fill="#7a7c8a"/><rect x="9" y="2" width="1" height="1" fill="#b5b2aa"/><rect x="10" y="2" width="1" height="1" fill="#a3a69f"/><rect x="11" y="2" width="1" height="1" fill="#a8aaa6"/><rect x="12" y="2" width="1" height="1" fill="#a9a09c"/><rect x="13" y="2" width="1" height="1" fill="#56504e"/><rect x="14" y="2" width="1" height="1" fill="#7d7c7a"/><rect x="15" y="2" width="1" height="1" fill="#5c5b5b"/><rect x="0" y="3" width="1" height="1" fill="#adb3c8"/><rect x="1" y="3" width="1" height="1" fill="#d6dbec"/><rect x="2" y="3" width="1" height="1" fill="#dfe3f0"/><rect x="3" y="3" width="1" height="1" fill="#c6cce2"/><rect x="4" y="3" width="1" height="1" fill="#747886"/><rect x="5" y="3" width="1" height="1" fill="#545558"/><rect x="6" y="3" width="1" height="1" fill="#858680"/><rect x="7" y="3" width="1" height="1" fill="#6a6863"/><rect x="8" y="3" width="1" height="1" fill="#8a8c98"/><rect x="9" y="3" width="1" height="1" fill="#95928a"/><rect x="10" y="3" width="1" height="1" fill="#8c8f88"/><rect x="11" y="3" width="1" height="1" fill="#8f8e88"/><rect x="12" y="3" width="1" height="1" fill="#7f8082"/><rect x="13" y="3" width="1" height="1" fill="#524e4d"/><rect x="14" y="3" width="1" height="1" fill="#5a5959"/><rect x="0" y="4" width="1" height="1" fill="#6c6d73"/><rect x="1" y="4" width="1" height="1" fill="#c8cad6"/><rect x="2" y="4" width="1" height="1" fill="#d5d9e8"/><rect x="3" y="4" width="1" height="1" fill="#a8aab4"/><rect x="4" y="4" width="1" height="1" fill="#4f4f50"/></svg>
</div>
<div id="dt"><div class="in">
<div class="title">
  <svg class="abs" style="left:4.900px;top:7.800px" width="20.300" height="20.100" viewBox="0 0 20 20"><defs><linearGradient id="eg1" x1="0" y1="0" x2="0.600" y2="1"><stop offset="0" stop-color="#1f9fe8"/><stop offset=".55" stop-color="#0c74d4"/><stop offset="1" stop-color="#0a5cbc"/></linearGradient><linearGradient id="eg2" x1="0" y1="0" x2="1" y2="0.350"><stop offset="0" stop-color="#2bb2f0"/><stop offset=".45" stop-color="#30c0d6"/><stop offset=".65" stop-color="#3acab8"/><stop offset=".9" stop-color="#5cdc5c"/><stop offset="1" stop-color="#52d24a"/></linearGradient><clipPath id="ec"><circle cx="10" cy="10" r="10"/></clipPath></defs><g clip-path="url(#ec)"><rect width="20" height="20" fill="url(#eg1)"/><path d="M6 7C4.500 9 4.800 12.500 6.500 15c2 3 5.500 4.500 8.500 4 2-.5 3.800-2 4.300-3.400-1.800.8-4.300 1-6.300.4-2.500-.8-4.700-3-5-5.500-.1-1.500.3-2.800 1-3.700C8 6.500 7 6.600 6 7z" fill="#0d4c9a"/><path d="M10 12.300L20 12.800 19.600 15.300C16.500 16.600 12.500 16.200 10.200 13.600z" fill="#f3f3f3"/><path d="M-1 7.500C0 3 5 0 10 0c6 0 10.500 4 10.500 9 0 3-2.800 4.400-5.300 4.400-2.200 0-3.700-.6-3.700-1.400 0-.6.800-1 .8-2.200C12.300 7.600 10.800 6.100 8.500 6 5.500 5.700 1.500 5.800-1 7.800z" fill="url(#eg2)"/><circle cx="10.200" cy="10.500" r="2.450" fill="#f3f3f3"/></g></svg>
  <div class="t15" style="left:32px;top:8.700px;color:#000;letter-spacing:-0.090px">DevTools - extension://</div>
  <svg class="abs" style="left:181.0px;top:13.0px" width="245" height="13.5" viewBox="0 0 35 2" preserveAspectRatio="none" shape-rendering="crispEdges"><rect x="0" y="0" width="1" height="1" fill="#d4d4d4"/><rect x="1" y="0" width="1" height="1" fill="#cfcfcf"/><rect x="2" y="0" width="1" height="1" fill="#dddddd"/><rect x="3" y="0" width="1" height="1" fill="#cbcbcb"/><rect x="4" y="0" width="1" height="1" fill="#c8c8c8"/><rect x="5" y="0" width="1" height="1" fill="#c2c2c2"/><rect x="6" y="0" width="1" height="1" fill="#cbcbcb"/><rect x="7" y="0" width="1" height="1" fill="#d9d9d9"/><rect x="8" y="0" width="2" height="1" fill="#d4d4d4"/><rect x="10" y="0" width="2" height="1" fill="#cbcbcb"/><rect x="12" y="0" width="1" height="1" fill="#bebebe"/><rect x="13" y="0" width="1" height="1" fill="#cfcfcf"/><rect x="14" y="0" width="1" height="1" fill="#d4d4d4"/><rect x="15" y="0" width="1" height="1" fill="#cfcfcf"/><rect x="16" y="0" width="1" height="1" fill="#bebebe"/><rect x="17" y="0" width="1" height="1" fill="#c2c2c2"/><rect x="18" y="0" width="1" height="1" fill="#c8c8c8"/><rect x="19" y="0" width="1" height="1" fill="#cfcfcf"/><rect x="20" y="0" width="1" height="1" fill="#c2c2c2"/><rect x="21" y="0" width="1" height="1" fill="#d9d9d9"/><rect x="22" y="0" width="1" height="1" fill="#c2c2c2"/><rect x="23" y="0" width="1" height="1" fill="#d9d9d9"/><rect x="24" y="0" width="1" height="1" fill="#cbcbcb"/><rect x="25" y="0" width="3" height="1" fill="#bebebe"/><rect x="28" y="0" width="1" height="1" fill="#cbcbcb"/><rect x="29" y="0" width="1" height="1" fill="#cfcfcf"/><rect x="30" y="0" width="1" height="1" fill="#dddddd"/><rect x="31" y="0" width="1" height="1" fill="#c8c8c8"/><rect x="32" y="0" width="1" height="1" fill="#c2c2c2"/><rect x="33" y="0" width="1" height="1" fill="#cfcfcf"/><rect x="34" y="0" width="1" height="1" fill="#cbcbcb"/><rect x="0" y="1" width="1" height="1" fill="#ababab"/><rect x="1" y="1" width="1" height="1" fill="#b2b2b2"/><rect x="2" y="1" width="1" height="1" fill="#bebebe"/><rect x="3" y="1" width="1" height="1" fill="#b2b2b2"/><rect x="4" y="1" width="1" height="1" fill="#bebebe"/><rect x="5" y="1" width="1" height="1" fill="#a3a3a3"/><rect x="6" y="1" width="1" height="1" fill="#bebebe"/><rect x="7" y="1" width="1" height="1" fill="#b8b8b8"/><rect x="8" y="1" width="1" height="1" fill="#a3a3a3"/><rect x="9" y="1" width="1" height="1" fill="#bebebe"/><rect x="10" y="1" width="1" height="1" fill="#ababab"/><rect x="11" y="1" width="1" height="1" fill="#b8b8b8"/><rect x="12" y="1" width="1" height="1" fill="#989898"/><rect x="13" y="1" width="1" height="1" fill="#b2b2b2"/><rect x="14" y="1" width="1" height="1" fill="#a6a6a6"/><rect x="15" y="1" width="1" height="1" fill="#b8b8b8"/><rect x="16" y="1" width="1" height="1" fill="#a3a3a3"/><rect x="17" y="1" width="1" height="1" fill="#a0a0a0"/><rect x="18" y="1" width="1" height="1" fill="#ababab"/><rect x="19" y="1" width="2" height="1" fill="#b2b2b2"/><rect x="21" y="1" width="2" height="1" fill="#a0a0a0"/><rect x="23" y="1" width="2" height="1" fill="#949494"/><rect x="25" y="1" width="1" height="1" fill="#a0a0a0"/><rect x="26" y="1" width="1" height="1" fill="#b8b8b8"/><rect x="27" y="1" width="1" height="1" fill="#a0a0a0"/><rect x="28" y="1" width="1" height="1" fill="#bebebe"/><rect x="29" y="1" width="1" height="1" fill="#a6a6a6"/><rect x="30" y="1" width="1" height="1" fill="#989898"/><rect x="31" y="1" width="1" height="1" fill="#b2b2b2"/><rect x="32" y="1" width="2" height="1" fill="#bebebe"/><rect x="34" y="1" width="1" height="1" fill="#a0a0a0"/></svg>
  <div class="t15" style="left:425.500px;top:8.700px;color:#000;letter-spacing:-0.090px">/bac...</div>
  <div class="abs" style="left:491px;top:18px;width:13px;height:1px;background:#000"></div>
  <div class="abs" style="left:548px;top:12px;width:13px;height:13px;border:1px solid #000;border-radius:1px"></div>
  <svg class="abs" style="left:605px;top:11px" width="15" height="15" viewBox="0 0 15 15" stroke="#000" stroke-width="1.1" fill="none"><path d="M1 1l13 13M14 1L1 14"/></svg>
</div>
<div class="tabs">
  <div class="abs" style="left:73px;top:0;width:1px;height:39px;background:#cacaca"></div>
  <div class="abs" style="left:567px;top:0;width:1px;height:39px;background:#cacaca"></div>
  <div class="abs" style="left:319px;top:3px;width:80px;height:36px;background:#fff;border-radius:5px 5px 0 0"></div>
  <div class="abs" style="left:319px;top:35px;width:80px;height:3px;background:#0b6cd4;border-radius:2px"></div>
  <svg class="abs" style="left:0;top:0" width="641" height="39" viewBox="0 0 641 39" fill="none" stroke="#3c3c3c" stroke-width="1.5" stroke-linecap="round" stroke-linejoin="round">
<g stroke="#4a4a4a"><path d="M19 26.200H13.200a2.500 2.500 0 0 1-2.500-2.500V15a2.500 2.500 0 0 1 2.500-2.500h14.300a2.500 2.500 0 0 1 2.500 2.500v6.500"/><path d="M20.800 20.200l.7 8.800 2.700-2.900 5.200-.1z"/>
<rect x="47.700" y="11.700" width="15.800" height="15.800" rx="3"/><path d="M48 14.500a2.500 2.500 0 0 1 2.500-2.500h1.300v15.200h-1.300a2.500 2.500 0 0 1-2.500-2.500z" fill="#4a4a4a"/></g>
<path d="M101.300 16.600l-5.300 4.300 5.300 4.300M109.800 11.700l-6.400 17.400M112 16.600l5.300 4.300-5.300 4.300"/>
<g stroke="#1f1f1f"><rect x="188" y="12" width="17.500" height="17.300" rx="3.200"/><path d="M188 16h17.500M191 20.300l3.200 2.600-3.200 2.600M196 25.300h5"/></g>
<circle cx="207.600" cy="28.600" r="6" fill="#d93025" stroke="none"/><path d="M205.700 26.700l3.800 3.800M209.500 26.700l-3.800 3.800" stroke="#fff" stroke-width="1.100"/>
<g stroke="#2a2a2a"><path d="M297 18.500c0-3 2-5 4.500-5s4.500 2 4.500 5v5.500c0 3.200-2 5.500-4.500 5.500s-4.500-2.300-4.500-5.500z"/><path d="M298.600 13.800l-1.800-3.600M304.400 13.800l1.800-3.600M297 17.500l-2.200-1.200-1-4.200M306 17.500l2.200-1.200 1-4.200M297 21.500h-5.400M306 21.500h5.400M297 25l-2.400 1.300-.8 3.500M306 25l2.400 1.300.8 3.500"/></g>
<g stroke="#1f1f1f"><path d="M329.300 19.800a13.600 13.600 0 0 1 21.400 0M333.300 22.800a8.700 8.700 0 0 1 13.400 0M336.600 25.300a4.500 4.500 0 0 1 6.800 0"/><circle cx="340" cy="26.700" r="1.300" fill="#1f1f1f" stroke-width=".8"/>
<rect x="411" y="10.800" width="18.200" height="18.200" rx="4"/><path d="M411 15h18.200"/></g>
<path d="M453 19.300h17M461.500 10.800v17" stroke="#2a2a2a" stroke-width="1.300"/>
<g fill="#2a2a2a" stroke="none"><circle cx="581" cy="16.400" r="1.400"/><circle cx="587.400" cy="16.400" r="1.400"/><circle cx="593.700" cy="16.400" r="1.400"/></g>
<circle cx="622.500" cy="16.400" r="9.600" stroke="#4a4a4a" stroke-width="1.100"/><path d="M619.700 13.600c0-1.700 1.200-2.800 2.900-2.800s2.800 1.100 2.800 2.600c0 2.300-2.800 2.500-2.800 5" stroke="#4a4a4a" stroke-width="1.200"/><circle cx="622.600" cy="21.400" r=".9" fill="#4a4a4a" stroke="none"/>
</svg>
  <div class="t15" style="left:124px;top:10px;color:#5f5f5f">元素</div>
  <div class="t15" style="left:214px;top:10px;color:#5f5f5f">控制台</div>
  <div class="t15" style="left:357px;top:10px;color:#1f1f1f">网络</div>
</div>
<div class="ntb">
  <svg class="abs" style="left:0;top:0" width="641" height="32" viewBox="0 0 641 32" fill="none" stroke="#3c3c3c" stroke-width="1.500" stroke-linecap="round" stroke-linejoin="round">
<circle cx="20.500" cy="16.400" r="9.500" stroke="#d93025"/><rect x="17" y="12.900" width="7" height="7" rx="1" fill="#d93025" stroke="none"/>
<circle cx="55.500" cy="16.400" r="9.300"/><path d="M49 22.900L62 9.900"/>
<path d="M80.800 13.200H91M83 18.400h12M85.500 23.400h7.500" stroke="#1a73e8"/>
<circle cx="96.100" cy="10.700" r="5.500" fill="#1a73e8" stroke="none"/><path d="M94.300 8.900l3.600 3.600M97.900 8.900l-3.600 3.600" stroke="#fff" stroke-width="1.200"/>
<circle cx="123.600" cy="14.700" r="6.500"/><path d="M128.300 19.400l5.300 5.300"/>
<path d="M424.500 13.200h11.800l-5.900 7.800z" fill="#5f5f5f" stroke="#5f5f5f" stroke-width="1"/>
<path d="M451 15.500a13 13 0 0 1 19.600 0M454.300 19a8.500 8.500 0 0 1 13-.2M457.400 22.300a4.200 4.200 0 0 1 3.600-1.300"/>
<path d="M472.15 21.65L472.15 23.15L470.37 23.40L469.97 24.36L471.05 25.80L470.00 26.85L468.56 25.77L467.60 26.17L467.35 27.95L465.85 27.95L465.60 26.17L464.64 25.77L463.20 26.85L462.15 25.80L463.23 24.36L462.83 23.40L461.05 23.15L461.05 21.65L462.83 21.40L463.23 20.44L462.15 19.00L463.20 17.95L464.64 19.03L465.60 18.63L465.85 16.85L467.35 16.85L467.60 18.63L468.56 19.03L470.00 17.95L471.05 19.00L469.97 20.44L470.37 21.40z" fill="#3c3c3c" stroke="none"/><circle cx="466.6" cy="22.4" r="1.700" fill="#f9f9f9" stroke="none"/>
<g stroke="#4a4a4a"><path d="M487.500 7.300h14.500M494.700 9.700v16.500M488.500 15.700l6.200-6 6.200 6"/>
<path d="M523.500 25.700h14.500M530.600 7v16.300M524.600 17.500l6 6 6-6"/></g>
<g stroke="#3c3c3c" stroke-width="1.300"><circle cx="618.500" cy="16.500" r="3"/><path d="M616.700 6.200h3.600l.7 2.900 1.700.9 2.800-.900 1.800 3.100-2.100 2 0 2 2.100 2-1.800 3.100-2.800-.9-1.700 1-.7 2.900h-3.600l-.7-2.900-1.700-1-2.800.9-1.800-3.100 2.100-2 0-2-2.100-2 1.800-3.100 2.800.9 1.700-.9z"/></g>
</svg>
  <div class="cb" style="left:150px;top:9px"><svg width="15" height="15" viewBox="0 0 15 15" fill="none" stroke="#fff" stroke-width="2.300"><path d="M2.800 7.400l3.500 3.700 6-8"/></svg></div>
  <div class="t15" style="left:173px;top:7px;color:#3c3c3c">保留日志</div>
  <div class="cb" style="left:246px;top:9px"><svg width="15" height="15" viewBox="0 0 15 15" fill="none" stroke="#fff" stroke-width="2.300"><path d="M2.800 7.400l3.500 3.700 6-8"/></svg></div>
  <div class="t15" style="left:269px;top:7px;color:#3c3c3c">禁用缓存</div>
  <div class="t15" style="left:345px;top:7px;color:#3c3c3c">无限制</div>
  <div class="abs" style="left:424px;top:79px;"></div>
</div>
<div class="frow">
  <div class="abs" style="left:6px;top:4px;width:399px;height:25px;border-radius:13px;background:#edf2fa"></div>
  <svg class="abs" style="left:0;top:0" width="60" height="32" viewBox="0 0 60 32" fill="none" stroke="#3c3c3c" stroke-width="1.5" stroke-linecap="round"><path d="M19.500 12.800h13.500M22 17.200h8.500M24.200 21.600h4"/></svg>
  <div class="t15" style="left:41px;top:7px;color:#474747">筛选器</div>
  <div class="abs" style="left:420px;top:9px;width:15px;height:15px;border:1px solid #767676;border-radius:3px;background:#fff"></div>
  <div class="t15" style="left:442px;top:7px;color:#3c3c3c">反转</div>
  <div class="abs" style="left:486px;top:7px;width:1px;height:20px;background:#d3e3fd"></div>
  <div class="t15" style="left:510px;top:7px;color:#1f1f1f">增加筛选条件</div>
  <div class="abs" style="left:610.500px;top:15px;width:0;height:0;border-left:7px solid transparent;border-right:7px solid transparent;border-top:9px solid #2a2a2a"></div>
</div>
<div class="chip" style="left:5px;width:43px;background:#d6d6d6;border-color:#d6d6d6">全部</div>
<div class="abs" style="left:53px;top:147px;width:1px;height:20px;background:#d3e3fd"></div>
<div class="chip" style="left:59px;width:85px;letter-spacing:-0.300px">Fetch/XHR</div>
<div class="chip" style="left:149px;width:41px">文档</div>
<div class="chip" style="left:196px;width:40px;letter-spacing:-0.300px">CSS</div>
<div class="chip" style="left:241px;width:28px;letter-spacing:-0.300px">JS</div>
<div class="chip" style="left:274px;width:43px">字体</div>
<div class="chip" style="left:322px;width:41px;letter-spacing:-0.300px">Img</div>
<div class="chip" style="left:368px;width:42px">媒体</div>
<div class="chip" style="left:415px;width:43px">清单</div>
<div class="chip" style="left:463px;width:58px;letter-spacing:-0.300px">Socket</div>
<div class="chip" style="left:526px;width:56px;letter-spacing:-0.300px">Wasm</div>
<div class="chip" style="left:587px;width:42px">其他</div>
<div class="tl">
<div class="gl" style="left:150px"></div><div class="gl" style="left:300px"></div><div class="gl" style="left:450px"></div><div class="gl" style="left:600px"></div>
<div class="tlab" style="left:67px">50,000 ms</div><div class="tlab" style="left:217px">100,000 ms</div><div class="tlab" style="left:367px">150,000 ms</div><div class="tlab" style="left:517px">200,000 ms</div>
<div class="abs" style="left:29.400px;top:54.400px;width:516.800px;height:2.600px;background:repeating-linear-gradient(90deg,#2e6fe3 0 5.300px,rgba(46,111,227,.25) 5.300px 6.730px)"></div>
<div class="tb"><i style="left:2.0px;top:35.7px;width:10.0px;height:2.2px;background:#2e6fe3"></i><i style="left:22.9px;top:35.7px;width:11.4px;height:2.2px;background:#2e6fe3"></i><i style="left:94.0px;top:35.7px;width:8.0px;height:2.2px;background:#2e6fe3"></i><i style="left:103.8px;top:35.7px;width:11.2px;height:2.2px;background:#2e6fe3"></i><i style="left:2.0px;top:39.4px;width:10.0px;height:2.2px;background:#2e6fe3"></i><i style="left:22.9px;top:39.4px;width:11.4px;height:2.2px;background:#2e6fe3"></i><i style="left:94.0px;top:39.4px;width:8.0px;height:2.2px;background:#2e6fe3"></i><i style="left:103.8px;top:39.4px;width:11.2px;height:2.2px;background:#2e6fe3"></i><i style="left:2.0px;top:43.1px;width:5.0px;height:2.2px;background:#c9dbfa"></i><i style="left:7.0px;top:43.1px;width:6.0px;height:2.2px;background:#2e6fe3"></i><i style="left:7.0px;top:46.9px;width:7.8px;height:2.2px;background:#2e6fe3"></i><i style="left:7.0px;top:50.6px;width:8.0px;height:2.2px;background:#2e6fe3"></i><i style="left:2.0px;top:46.9px;width:2.0px;height:6.5px;background:#34a853"></i><i style="left:4.0px;top:46.9px;width:1.2px;height:6.5px;background:#8ab4f8"></i><i style="left:2.0px;top:54.4px;width:5.0px;height:2.6px;background:#d3e3fd"></i><i style="left:10.2px;top:54.4px;width:11.7px;height:2.6px;background:#2e6fe3"></i><i style="left:23.2px;top:58.6px;width:0.8px;height:2.0px;background:#9bd5a8"></i><i style="left:24.5px;top:58.6px;width:1.0px;height:2.0px;background:#2e6fe3"></i><i style="left:26.0px;top:58.6px;width:12.7px;height:2.0px;background:#5f93ec"></i><i style="left:96.0px;top:62.2px;width:7.8px;height:2.2px;background:#2e6fe3"></i><i style="left:105.3px;top:62.2px;width:11.4px;height:2.2px;background:#2e6fe3"></i><i style="left:118.7px;top:62.2px;width:11.3px;height:2.2px;background:#2e6fe3"></i><i style="left:284.0px;top:65.8px;width:1.0px;height:2.0px;background:#34a853"></i><i style="left:286.0px;top:65.7px;width:11.5px;height:2.2px;background:#2e6fe3"></i><i style="left:320.5px;top:69.7px;width:11.0px;height:2.2px;background:#2e6fe3"></i><i style="left:320.5px;top:73.1px;width:11.0px;height:2.2px;background:#2e6fe3"></i><i style="left:321.8px;top:76.8px;width:11.0px;height:2.2px;background:#2e6fe3"></i><i style="left:335.2px;top:76.8px;width:11.0px;height:2.2px;background:#2e6fe3"></i></div>
<div class="abs" style="left:0;top:0;width:1.500px;height:100px;background:#a8c7fa"></div>
<div class="abs" style="left:0;top:1px;width:5.500px;height:22px;background:#9b9b9b;border-radius:0 3px 3px 0;box-shadow:0 0 0 1px #c5d9f9"></div><div class="abs" style="left:1.300px;top:7px;width:1.200px;height:9px;background:#1a56db"></div>
<div class="abs" style="left:639.500px;top:0;width:1.500px;height:100px;background:#a8c7fa"></div>
<div class="abs" style="left:637px;top:1px;width:5px;height:22px;background:#9b9b9b;border-radius:3px 0 0 3px;box-shadow:0 0 0 1px #c5d9f9"></div><div class="abs" style="left:639px;top:7px;width:2px;height:9px;background:#1a56db"></div>
</div><div class="abs" style="left:0;top:274px;width:202px;height:33px;background:#f5f5f5;border-bottom:1px solid #d3e3fd"></div>
<div class="t15" style="left:6px;top:280px;color:#1f1f1f">名称</div>
<div class="abs" style="left:183px;top:274px;width:19px;height:427px;background:#fafafa"></div>
<div class="abs" style="left:186px;top:286px;width:0;height:0;border-left:6.500px solid transparent;border-right:6.500px solid transparent;border-bottom:7px solid #8a8a8a"></div>
<div class="row" style="top:307.50px"><svg width="15" height="15" viewBox="0 0 15 15" fill="none" stroke="#1f1f1f" stroke-width="1.700" stroke-linejoin="round"><path d="M2.400.850H9.400L13.050 4.700V11.400a1.700 1.700 0 0 1-1.700 1.700H2.400A1.550 1.550 0 0 1 .850 11.550V2.400A1.550 1.550 0 0 1 2.400.850z"/><path d="M9.300 1.200V4.800H12.800z" fill="#1f1f1f" stroke-width="1"/></svg>archive-page</div>
<div class="row alt" style="top:333.75px"><svg width="15" height="15" viewBox="0 0 15 15" fill="none" stroke="#1f1f1f" stroke-width="1.700" stroke-linejoin="round"><path d="M2.400.850H9.400L13.050 4.700V11.400a1.700 1.700 0 0 1-1.700 1.700H2.400A1.550 1.550 0 0 1 .850 11.550V2.400A1.550 1.550 0 0 1 2.400.850z"/><path d="M9.300 1.200V4.800H12.800z" fill="#1f1f1f" stroke-width="1"/></svg>selectWorkQuestio...</div>
<div class="row" style="top:360.00px"><svg width="15" height="15" viewBox="0 0 15 15" fill="none" stroke="#1f1f1f" stroke-width="1.700" stroke-linejoin="round"><path d="M2.400.850H9.400L13.050 4.700V11.400a1.700 1.700 0 0 1-1.700 1.700H2.400A1.550 1.550 0 0 1 .850 11.550V2.400A1.550 1.550 0 0 1 2.400.850z"/><path d="M9.300 1.200V4.800H12.800z" fill="#1f1f1f" stroke-width="1"/></svg>archive-page</div>
<div class="row alt" style="top:386.25px"><svg width="15" height="15" viewBox="0 0 15 15" fill="none" stroke="#1f1f1f" stroke-width="1.700" stroke-linejoin="round"><path d="M2.400.850H9.400L13.050 4.700V11.400a1.700 1.700 0 0 1-1.700 1.700H2.400A1.550 1.550 0 0 1 .850 11.550V2.400A1.550 1.550 0 0 1 2.400.850z"/><path d="M9.300 1.200V4.800H12.800z" fill="#1f1f1f" stroke-width="1"/></svg>selectWorkQuestio...</div>
<div class="row" style="top:412.50px"><svg width="15" height="15" viewBox="0 0 15 15" fill="none" stroke="#1f1f1f" stroke-width="1.700" stroke-linejoin="round"><path d="M2.400.850H9.400L13.050 4.700V11.400a1.700 1.700 0 0 1-1.700 1.700H2.400A1.550 1.550 0 0 1 .850 11.550V2.400A1.550 1.550 0 0 1 2.400.850z"/><path d="M9.300 1.200V4.800H12.800z" fill="#1f1f1f" stroke-width="1"/></svg>archive-page</div>
<div class="row alt" style="top:438.75px"><svg width="15" height="15" viewBox="0 0 15 15" fill="none" stroke="#1f1f1f" stroke-width="1.700" stroke-linejoin="round"><path d="M2.400.850H9.400L13.050 4.700V11.400a1.700 1.700 0 0 1-1.700 1.700H2.400A1.550 1.550 0 0 1 .850 11.550V2.400A1.550 1.550 0 0 1 2.400.850z"/><path d="M9.300 1.200V4.800H12.800z" fill="#1f1f1f" stroke-width="1"/></svg>selectWorkQuestio...</div>
<div class="row" style="top:465.00px"><svg width="15" height="15" viewBox="0 0 15 15" fill="none" stroke="#1f1f1f" stroke-width="1.700" stroke-linejoin="round"><path d="M2.400.850H9.400L13.050 4.700V11.400a1.700 1.700 0 0 1-1.700 1.700H2.400A1.550 1.550 0 0 1 .850 11.550V2.400A1.550 1.550 0 0 1 2.400.850z"/><path d="M9.300 1.200V4.800H12.800z" fill="#1f1f1f" stroke-width="1"/></svg>archive-page</div>
<div class="row alt" style="top:491.25px"><svg width="15" height="15" viewBox="0 0 15 15" fill="none" stroke="#1f1f1f" stroke-width="1.700" stroke-linejoin="round"><path d="M2.400.850H9.400L13.050 4.700V11.400a1.700 1.700 0 0 1-1.700 1.700H2.400A1.550 1.550 0 0 1 .850 11.550V2.400A1.550 1.550 0 0 1 2.400.850z"/><path d="M9.300 1.200V4.800H12.800z" fill="#1f1f1f" stroke-width="1"/></svg>selectWorkQuestio...</div>
<div class="row" style="top:517.50px"><svg width="15" height="15" viewBox="0 0 15 15" fill="none" stroke="#1f1f1f" stroke-width="1.700" stroke-linejoin="round"><path d="M2.400.850H9.400L13.050 4.700V11.400a1.700 1.700 0 0 1-1.700 1.700H2.400A1.550 1.550 0 0 1 .850 11.550V2.400A1.550 1.550 0 0 1 2.400.850z"/><path d="M9.300 1.200V4.800H12.800z" fill="#1f1f1f" stroke-width="1"/></svg>archive-page</div>
<div class="row alt" style="top:543.75px"><svg width="15" height="15" viewBox="0 0 15 15" fill="none" stroke="#1f1f1f" stroke-width="1.700" stroke-linejoin="round"><path d="M2.400.850H9.400L13.050 4.700V11.400a1.700 1.700 0 0 1-1.700 1.700H2.400A1.550 1.550 0 0 1 .850 11.550V2.400A1.550 1.550 0 0 1 2.400.850z"/><path d="M9.300 1.200V4.800H12.800z" fill="#1f1f1f" stroke-width="1"/></svg>selectWorkQuestio...</div>
<div class="row" style="top:570.00px"><svg width="15" height="15" viewBox="0 0 15 15" fill="none" stroke="#1f1f1f" stroke-width="1.700" stroke-linejoin="round"><path d="M2.400.850H9.400L13.050 4.700V11.400a1.700 1.700 0 0 1-1.700 1.700H2.400A1.550 1.550 0 0 1 .850 11.550V2.400A1.550 1.550 0 0 1 2.400.850z"/><path d="M9.300 1.200V4.800H12.800z" fill="#1f1f1f" stroke-width="1"/></svg>archive-page</div>
<div class="row alt" style="top:596.25px"><svg width="15" height="15" viewBox="0 0 15 15" fill="none" stroke="#1f1f1f" stroke-width="1.700" stroke-linejoin="round"><path d="M2.400.850H9.400L13.050 4.700V11.400a1.700 1.700 0 0 1-1.700 1.700H2.400A1.550 1.550 0 0 1 .850 11.550V2.400A1.550 1.550 0 0 1 2.400.850z"/><path d="M9.300 1.200V4.800H12.800z" fill="#1f1f1f" stroke-width="1"/></svg>selectWorkQuestio...</div>
<div class="row" style="top:622.50px"><svg width="15" height="15" viewBox="0 0 15 15" fill="none" stroke="#1f1f1f" stroke-width="1.700" stroke-linejoin="round"><path d="M2.400.850H9.400L13.050 4.700V11.400a1.700 1.700 0 0 1-1.700 1.700H2.400A1.550 1.550 0 0 1 .850 11.550V2.400A1.550 1.550 0 0 1 2.400.850z"/><path d="M9.300 1.200V4.800H12.800z" fill="#1f1f1f" stroke-width="1"/></svg>archive-page</div>
<div class="row alt" style="top:648.75px"><svg width="15" height="15" viewBox="0 0 15 15" fill="none" stroke="#1f1f1f" stroke-width="1.700" stroke-linejoin="round"><path d="M2.400.850H9.400L13.050 4.700V11.400a1.700 1.700 0 0 1-1.700 1.700H2.400A1.550 1.550 0 0 1 .850 11.550V2.400A1.550 1.550 0 0 1 2.400.850z"/><path d="M9.300 1.200V4.800H12.800z" fill="#1f1f1f" stroke-width="1"/></svg>selectWorkQuestio...</div>
<div class="row" style="top:675.00px"><svg width="15" height="15" viewBox="0 0 15 15" fill="none" stroke="#1f1f1f" stroke-width="1.700" stroke-linejoin="round"><path d="M2.400.850H9.400L13.050 4.700V11.400a1.700 1.700 0 0 1-1.700 1.700H2.400A1.550 1.550 0 0 1 .850 11.550V2.400A1.550 1.550 0 0 1 2.400.850z"/><path d="M9.300 1.200V4.800H12.800z" fill="#1f1f1f" stroke-width="1"/></svg>archive-page</div>
<div class="abs" style="left:187px;top:643px;width:11px;height:28px;border-radius:5.500px;background:#8a8a8a"></div>
<div class="abs" style="left:186px;top:682px;width:0;height:0;border-left:6.500px solid transparent;border-right:6.500px solid transparent;border-top:7px solid #8a8a8a"></div>
<div class="abs" style="left:0;top:701px;width:202px;height:34px;background:#fff;border-top:1px solid #d3e3fd"></div>
<div class="t15" style="left:13px;top:709px;color:#474747;letter-spacing:0.180px">216 次请求&nbsp;&nbsp; 已传输970 kB</div>
<div class="abs" style="left:202px;top:274px;width:1px;height:461px;background:#d3e3fd"></div>
<div class="abs" style="left:203px;top:274px;width:438px;height:33px;background:#eef2fb;border-bottom:1px solid #d3e3fd"></div>
<svg class="abs" style="left:219px;top:283px" width="17" height="17" viewBox="0 0 17 17" fill="none" stroke="#3c3c3c" stroke-width="1.300" stroke-linecap="round"><path d="M1.500 1.500l14 14M15.500 1.500l-14 14"/></svg>
<div class="abs" style="left:303px;top:276px;width:55px;height:31px;background:#fff;border-radius:5px 5px 0 0"></div>
<div class="abs" style="left:303px;top:304px;width:55px;height:4px;background:#0b57d0;border-radius:3px 3px 0 0"></div>
<div class="dtab" style="left:260px">标头</div>
<div class="dtab" style="left:315px;color:#0b57d0">负载</div>
<div class="dtab" style="left:370px">预览</div>
<div class="dtab" style="left:425px">响应</div>
<div class="dtab" style="left:480px">发起程序</div>
<div class="dtab" style="left:565px">计时</div>
<div class="abs" style="left:215.500px;top:323.500px;width:0;height:0;border-top:5.700px solid transparent;border-bottom:5.700px solid transparent;border-left:9px solid #2a2a2a"></div>
<div class="t15" style="left:229.500px;top:321px;color:#1f1f1f;font-weight:bold">请求负载</div>
<div class="abs" style="left:326px;top:315px;width:77px;height:30px;border:1px solid #a8c7fa;border-radius:15px;font-size:15px;line-height:27px;text-align:center;color:#0b57d0;white-space:nowrap">查看源</div>
<div class="abs" style="left:227.500px;top:355.600px;width:0;height:0;border-top:5.700px solid transparent;border-bottom:5.700px solid transparent;border-left:9px solid #2a2a2a"></div>
<div class="abs mono nw" style="left:244.500px;top:353px;font-size:13.400px;line-height:18px;color:#1f1f1f">{,…}</div>
<div class="abs mono nw" style="left:246px;top:379px;font-size:13.400px;line-height:18px;color:#8c1c4c">wallData<span>:</span></div>
<svg class="abs" style="left:329.9px;top:383.3px" width="308.0" height="21.0" viewBox="0 0 44 3" preserveAspectRatio="none" shape-rendering="crispEdges"><rect x="0" y="0" width="1" height="1" fill="#efdee9"/><rect x="1" y="0" width="1" height="1" fill="#eedbe7"/><rect x="2" y="0" width="1" height="1" fill="#e9d1e0"/><rect x="3" y="0" width="1" height="1" fill="#efdee9"/><rect x="4" y="0" width="1" height="1" fill="#efdde8"/><rect x="5" y="0" width="1" height="1" fill="#eedbe7"/><rect x="6" y="0" width="1" height="1" fill="#f3e6ee"/><rect x="7" y="0" width="1" height="1" fill="#efdde8"/><rect x="8" y="0" width="1" height="1" fill="#edd9e6"/><rect x="9" y="0" width="1" height="1" fill="#ebd5e3"/><rect x="10" y="0" width="1" height="1" fill="#f4e9f0"/><rect x="11" y="0" width="1" height="1" fill="#f1e3ec"/><rect x="12" y="0" width="1" height="1" fill="#f4e9f0"/><rect x="13" y="0" width="1" height="1" fill="#ebd4e3"/><rect x="14" y="0" width="1" height="1" fill="#ecd8e5"/><rect x="15" y="0" width="1" height="1" fill="#f5eaf1"/><rect x="16" y="0" width="1" height="1" fill="#e8cfdf"/><rect x="17" y="0" width="1" height="1" fill="#e8d0e0"/><rect x="18" y="0" width="1" height="1" fill="#edd9e5"/><rect x="19" y="0" width="1" height="1" fill="#eddae6"/><rect x="20" y="0" width="1" height="1" fill="#f3e7ef"/><rect x="21" y="0" width="1" height="1" fill="#f5ebf1"/><rect x="22" y="0" width="1" height="1" fill="#eedce8"/><rect x="23" y="0" width="1" height="1" fill="#f5eaf0"/><rect x="24" y="0" width="1" height="1" fill="#f3e6ee"/><rect x="25" y="0" width="1" height="1" fill="#f2e5ed"/><rect x="26" y="0" width="1" height="1" fill="#f5ebf1"/><rect x="27" y="0" width="1" height="1" fill="#efdee9"/><rect x="28" y="0" width="1" height="1" fill="#f0dfe9"/><rect x="29" y="0" width="1" height="1" fill="#ead3e2"/><rect x="30" y="0" width="1" height="1" fill="#eedde8"/><rect x="31" y="0" width="1" height="1" fill="#edd9e6"/><rect x="32" y="0" width="1" height="1" fill="#efdde8"/><rect x="33" y="0" width="1" height="1" fill="#edd8e5"/><rect x="34" y="0" width="1" height="1" fill="#efdee9"/><rect x="35" y="0" width="1" height="1" fill="#f2e3ec"/><rect x="36" y="0" width="2" height="1" fill="#e8cfdf"/><rect x="38" y="0" width="1" height="1" fill="#ead3e2"/><rect x="39" y="0" width="1" height="1" fill="#ecd7e4"/><rect x="40" y="0" width="1" height="1" fill="#f1e2ec"/><rect x="41" y="0" width="1" height="1" fill="#f2e5ed"/><rect x="42" y="0" width="1" height="1" fill="#f2e3ec"/><rect x="43" y="0" width="1" height="1" fill="#f5e9f0"/><rect x="1" y="1" width="1" height="1" fill="#e0bdd3"/><rect x="2" y="1" width="1" height="1" fill="#e5c8db"/><rect x="3" y="1" width="1" height="1" fill="#debad2"/><rect x="4" y="1" width="1" height="1" fill="#e5c9db"/><rect x="5" y="1" width="1" height="1" fill="#d5a5c4"/><rect x="6" y="1" width="1" height="1" fill="#debad2"/><rect x="7" y="1" width="1" height="1" fill="#ebd5e3"/><rect x="8" y="1" width="1" height="1" fill="#e8cedf"/><rect x="9" y="1" width="1" height="1" fill="#ddb8d0"/><rect x="10" y="1" width="1" height="1" fill="#e4c6da"/><rect x="11" y="1" width="1" height="1" fill="#dcb6cf"/><rect x="12" y="1" width="1" height="1" fill="#e5c8db"/><rect x="13" y="1" width="1" height="1" fill="#ead3e2"/><rect x="14" y="1" width="1" height="1" fill="#e2c1d6"/><rect x="15" y="1" width="1" height="1" fill="#d9afcb"/><rect x="16" y="1" width="1" height="1" fill="#dbb2cd"/><rect x="17" y="1" width="1" height="1" fill="#ead2e1"/><rect x="18" y="1" width="1" height="1" fill="#e6cadc"/><rect x="19" y="1" width="1" height="1" fill="#ddb6cf"/><rect x="20" y="1" width="1" height="1" fill="#e0bdd4"/><rect x="21" y="1" width="1" height="1" fill="#e9d1e1"/><rect x="22" y="1" width="1" height="1" fill="#e7cdde"/><rect x="23" y="1" width="1" height="1" fill="#e9d2e1"/><rect x="24" y="1" width="1" height="1" fill="#ead3e2"/><rect x="25" y="1" width="1" height="1" fill="#dfbcd3"/><rect x="26" y="1" width="1" height="1" fill="#e8cfe0"/><rect x="27" y="1" width="1" height="1" fill="#e3c3d8"/><rect x="28" y="1" width="1" height="1" fill="#e4c7da"/><rect x="29" y="1" width="1" height="1" fill="#e8cfdf"/><rect x="30" y="1" width="1" height="1" fill="#e0bed4"/><rect x="31" y="1" width="1" height="1" fill="#e9d1e0"/><rect x="32" y="1" width="1" height="1" fill="#e1c1d6"/><rect x="33" y="1" width="1" height="1" fill="#e9d1e1"/><rect x="34" y="1" width="1" height="1" fill="#e5c8db"/><rect x="35" y="1" width="1" height="1" fill="#e8cedf"/><rect x="36" y="1" width="1" height="1" fill="#e7ccde"/><rect x="37" y="1" width="1" height="1" fill="#dcb6cf"/><rect x="38" y="1" width="1" height="1" fill="#dfbbd3"/><rect x="39" y="1" width="1" height="1" fill="#e6cbdd"/><rect x="40" y="1" width="1" height="1" fill="#deb9d1"/><rect x="41" y="1" width="1" height="1" fill="#e8cedf"/><rect x="42" y="1" width="1" height="1" fill="#e5c8db"/><rect x="43" y="1" width="1" height="1" fill="#debad2"/><rect x="5" y="2" width="1" height="1" fill="#ebd5e3"/><rect x="12" y="2" width="1" height="1" fill="#f3e5ed"/><rect x="15" y="2" width="1" height="1" fill="#f1e2eb"/><rect x="16" y="2" width="1" height="1" fill="#f2e4ed"/><rect x="17" y="2" width="1" height="1" fill="#f3e6ee"/></svg>
<div class="abs" style="left:330px;top:406px;width:306px;height:6px;background:#f8faff"></div>
<div class="abs mono nw" style="left:634px;top:379px;font-size:13.400px;line-height:18px;color:#8c1c4c">3</div>
<div class="abs" style="left:203px;top:405px;width:438px;height:1px;background:#d3e3fd"></div>
<div class="abs" style="left:203px;top:716px;width:438px;height:19px;background:#fafafa"></div>
<div class="abs" style="left:214px;top:719px;width:0;height:0;border-top:6.500px solid transparent;border-bottom:6.500px solid transparent;border-right:7px solid #8a8a8a"></div>
<div class="abs" style="left:624px;top:719px;width:0;height:0;border-top:6.500px solid transparent;border-bottom:6.500px solid transparent;border-left:7px solid #8a8a8a"></div>
<div class="abs" style="left:232px;top:720px;width:230px;height:11px;border-radius:5.500px;background:#8a8a8a"></div>
<div class="abs" style="left:0;top:735px;width:641px;height:35px;background:#eef2fb;border-top:1px solid #d3e3fd;border-bottom:1px solid #d3e3fd"></div>
<div class="abs" style="left:0;top:738px;width:70px;height:33px;background:#fff;border-radius:0 5px 0 0"></div>
<div class="t15" style="left:13px;top:746px;color:#0b57d0">控制台</div>
<div class="t15" style="left:82px;top:746px;color:#5f5f5f">问题</div>
<div class="t15" style="left:137px;top:746px;color:#5f5f5f">搜索</div>
<svg class="abs" style="left:189px;top:744px" width="19" height="19" viewBox="0 0 19 19" fill="none" stroke="#2a2a2a" stroke-width="1.300"><path d="M1 9.500h17M9.500 1v17"/></svg>
<svg class="abs" style="left:572px;top:743px" width="60" height="20" viewBox="0 0 60 20" fill="none" stroke="#4a4a4a" stroke-width="1.400" stroke-linecap="round" stroke-linejoin="round"><path d="M6.500 4.500a4.200 4.200 0 0 0 0 8.200M4.800 2.500l2 2.100-2.300 1.700"/><rect x="12.500" y="3" width="9" height="6" rx="1" stroke-dasharray="2 1.800"/><rect x="9.500" y="9.500" width="12.500" height="7.500" rx="1.500"/><rect x="37" y="3" width="20" height="14" rx="2"/><path d="M37.500 12.500h19M47 6.500v5.500M44.300 8.800l2.700-2.600 2.700 2.600"/></svg>
<div class="abs" style="left:0;top:770px;width:641px;height:6px;background:#fff"></div>
</div></div>
<div id="tut">
<div class="ln" style="top:8px">脚本教程</div>
<div class="ln" style="top:8px;left:347px">关闭教程</div>
<div class="ln" style="top:33px">您已成功登录FCQ答题器</div>
<div class="ln" style="top:58px">直接进入需要答题页面即可自动运行答题</div>
<div class="ln" style="top:83px">在答题页面没反应的点下面的做题按钮</div>
<div class="ln" style="top:108px">本脚本支持绝大多数页面,通用</div>
<div class="ln" style="top:133px">在右下角位置可以拖动菜单</div>
<div class="tbtn" style="left:2px;width:56px">去广告</div>
<div class="tbtn" style="left:63px;width:68px">自动做题</div>
<div class="tbtn" style="left:135px;width:44px">搜题</div>
<div class="tbtn" style="left:183px;width:64px">快进1倍</div>
<div class="tbtn" style="left:251px;width:44px">设置</div>
<div class="tbtn" style="left:299px;width:44px">分享</div>
<div class="abs nw" style="left:348px;top:161px;font-size:12.300px;letter-spacing:.3px;line-height:18px;color:#86c440">delete键隐藏</div>
</div>
</body>
</html>
